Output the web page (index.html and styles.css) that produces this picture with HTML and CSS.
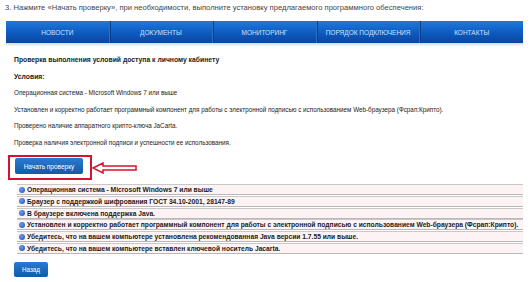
FILE: index.html
```html
<!DOCTYPE html>
<html lang="ru">
    <head>
        <meta charset="UTF-8">
        <meta name="viewport" content="width=device-width, initial-scale=1.0">
        <title>Проверка условий доступа</title>
        <link rel="stylesheet" href="styles.css">
    </head>
    <body>
        <p class="step">3. Нажмите «Начать проверку», при необходимости, выполните установку предлагаемого программного обеспечения:</p>

        <div class="nav">
            <a href="#">Новости</a>
            <a href="#">Документы</a>
            <a href="#">Мониторинг</a>
            <a href="#">Порядок подключения</a>
            <a href="#">Контакты</a>
        </div>
        <div class="nav-shadow"></div>

        <div class="content">
            <p class="title">Проверка выполнения условий доступа к личному кабинету</p>
            <p class="title">Условия:</p>
            <p>Операционная система - Microsoft Windows 7 или выше</p>
            <p>Установлен и корректно работает программный компонент для работы с электронной подписью с использованием Web-браузера (Фсрап:Крипто).</p>
            <p>Проверено наличие аппаратного крипто-ключа JaCarta.</p>
            <p>Проверка наличия электронной подписи и успешности ее использования.</p>

            <div class="check-row">
                <div class="highlight">
                    <button class="btn">Начать проверку</button>
                </div>
                <svg class="arrow" width="45" height="12" viewBox="0 0 45 12">
                    <path d="M1 6 L11 1 L11 4 L44 4 L44 8 L11 8 L11 11 Z" fill="none" stroke="#d2152e" stroke-width="1.5"/>
                </svg>
            </div>

            <ul class="results">
                <li>Операционная система - Microsoft Windows 7 или выше</li>
                <li>Браузер с поддержкой шифрования ГОСТ 34.10-2001, 28147-89</li>
                <li>В браузере включена поддержка Java.</li>
                <li>Установлен и корректно работает программный компонент для работы с электронной подписью с использованием Web-браузера (Фсрап:Крипто).</li>
                <li>Убедитесь, что на вашем компьютере установлена рекомендованная Java версии 1.7.55 или выше.</li>
                <li>Убедитесь, что на вашем компьютере вставлен ключевой носитель Jacarta.</li>
            </ul>

            <button class="btn btn-back">Назад</button>
        </div>
    </body>
</html>
```

FILE: styles.css
```css
body {
    font-family: "Liberation Sans", Arial, sans-serif;
    margin: 0;
    background: white;
    color: #222;
    width: 530px;
    height: 282px;
    overflow: hidden;
}
.step {
    margin: 0;
    padding: 3px 0 0 5px;
    height: 18px;
    font-size: 7.6px;
    color: #444;
}
.nav {
    display: flex;
    margin: 0 7px 0 6px;
    height: 22px;
    background: linear-gradient(#1f78dc, #0d57bb 60%, #0a479c);
}
.nav a {
    flex: 1;
    display: flex;
    align-items: center;
    justify-content: center;
    color: #cfe0f7;
    font-size: 6.5px;
    text-transform: uppercase;
    text-decoration: none;
    border-left: 1px solid #2b6fc2;
    box-shadow: inset 1px 0 0 #0a3f8a;
}
.nav a:first-child {
    border-left: none;
    box-shadow: none;
}
.nav-shadow {
    margin: 0 7px 0 6px;
    height: 3px;
    background: linear-gradient(#d8d8d8, #f6f6f6);
}
.content {
    padding: 6px 0 0 14px;
    font-size: 6.3px;
}
.content p {
    margin: 0;
    height: 16.5px;
    line-height: 16.5px;
}
.content p.title {
    font-weight: bold;
    font-size: 6.8px;
}
.check-row {
    display: flex;
    align-items: center;
    margin: 4px 0 0 -6px;
}
.highlight {
    border: 2px solid #d2152e;
    padding: 1px 7px 4px 5px;
}
.btn {
    display: block;
    border: none;
    border-radius: 2px;
    background: linear-gradient(#2a7ad0, #1259ab);
    color: white;
    font-family: "Liberation Sans", Arial, sans-serif;
    font-size: 6.5px;
    height: 16px;
    width: 68px;
    padding: 0;
    white-space: nowrap;
}
.results {
    list-style: none;
    margin: 4px 7px 0 3px;
    padding: 0;
}
.results li {
    display: flex;
    align-items: center;
    height: 9px;
    margin-bottom: 0.8px;
    padding-left: 10px;
    position: relative;
    background: #fdf3f5;
    border-top: 1px solid #c8c8c8;
    border-bottom: 1px solid #b8b8b8;
    font-weight: bold;
    font-size: 6.7px;
    color: #1a1a1a;
    white-space: nowrap;
}
.results li::before {
    content: "";
    position: absolute;
    left: 2px;
    top: 1.5px;
    width: 6px;
    height: 6px;
    border-radius: 50%;
    background: radial-gradient(circle at 35% 35%, #6a9ee8, #1c4fb0);
}
.btn-back {
    margin-top: 8px;
    width: 34px;
    height: 15px;
    font-size: 6.3px;
}
```
